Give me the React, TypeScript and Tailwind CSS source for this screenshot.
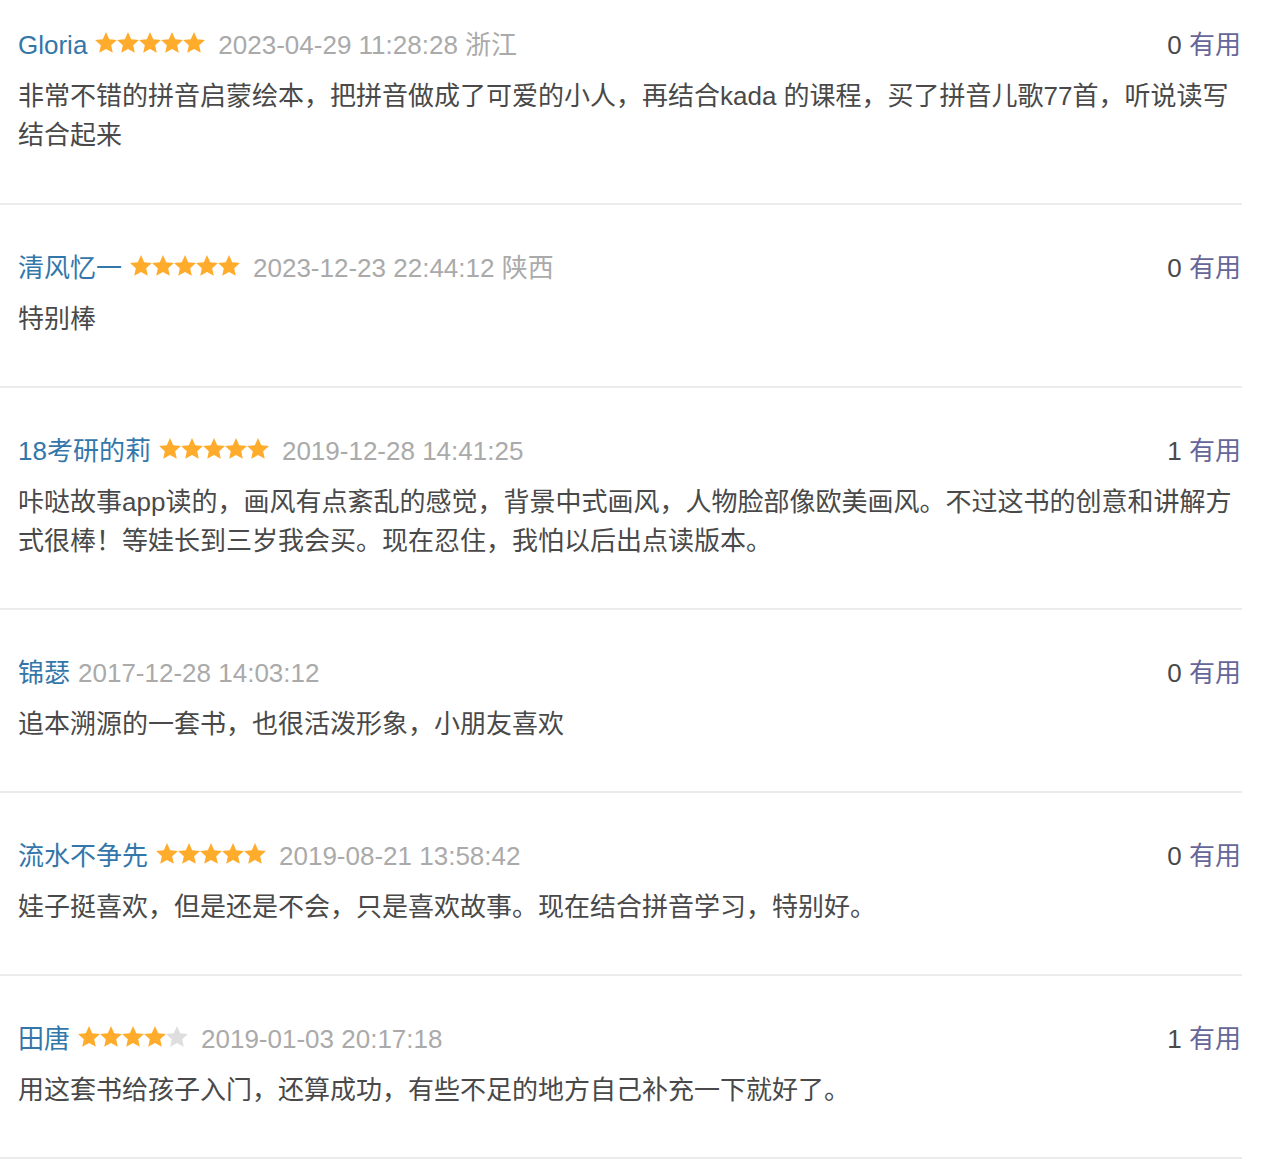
import React from 'react';

interface Comment {
  id: number;
  user: string;
  rating: number | null;
  time: string;
  location?: string;
  votes: number;
  content: string;
}

const comments: Comment[] = [
  {
    id: 1,
    user: 'Gloria',
    rating: 5,
    time: '2023-04-29 11:28:28',
    location: '浙江',
    votes: 0,
    content: '非常不错的拼音启蒙绘本，把拼音做成了可爱的小人，再结合kada 的课程，买了拼音儿歌77首，听说读写结合起来',
  },
  {
    id: 2,
    user: '清风忆一',
    rating: 5,
    time: '2023-12-23 22:44:12',
    location: '陕西',
    votes: 0,
    content: '特别棒',
  },
  {
    id: 3,
    user: '18考研的莉',
    rating: 5,
    time: '2019-12-28 14:41:25',
    votes: 1,
    content: '咔哒故事app读的，画风有点紊乱的感觉，背景中式画风，人物脸部像欧美画风。不过这书的创意和讲解方式很棒！等娃长到三岁我会买。现在忍住，我怕以后出点读版本。',
  },
  {
    id: 4,
    user: '锦瑟',
    rating: null,
    time: '2017-12-28 14:03:12',
    votes: 0,
    content: '追本溯源的一套书，也很活泼形象，小朋友喜欢',
  },
  {
    id: 5,
    user: '流水不争先',
    rating: 5,
    time: '2019-08-21 13:58:42',
    votes: 0,
    content: '娃子挺喜欢，但是还是不会，只是喜欢故事。现在结合拼音学习，特别好。',
  },
  {
    id: 6,
    user: '田唐',
    rating: 4,
    time: '2019-01-03 20:17:18',
    votes: 1,
    content: '用这套书给孩子入门，还算成功，有些不足的地方自己补充一下就好了。',
  },
];

// fat five-point star, like the rating sprite
function Star({ filled }: { filled: boolean }) {
  return (
    <svg viewBox="1.5 1.5 21 20" width="22" height="21" aria-hidden="true">
      <polygon
        points="12,1.5 15.06,8.29 22.46,9.1 16.95,14.11 18.47,21.4 12,17.7 5.53,21.4 7.05,14.11 1.54,9.1 8.94,8.29"
        fill={filled ? '#ffac2d' : '#dedede'}
      />
    </svg>
  );
}

function Stars({ rating }: { rating: number }) {
  return (
    <span className="flex items-center mb-[7px]">
      {[1, 2, 3, 4, 5].map((n) => (
        <Star key={n} filled={n <= rating} />
      ))}
    </span>
  );
}

export default function App() {
  return (
    <div className="bg-white min-h-[1162px] font-['Liberation_Sans','Noto_Sans_CJK_SC',sans-serif] text-[26px] leading-[39px] text-[#494949]">
      <div className="w-[1242px]">
        {comments.map((c, i) => (
          <div
            key={c.id}
            className={`${i === 0 ? 'pt-[26px] pb-[48px]' : 'pt-[44px] pb-[47px]'} pl-[18px] pr-[1px] border-b-2 border-[#ebebeb]`}
          >
            <div className="flex items-center justify-between h-[39px]">
              <div className="flex items-center">
                <span className="text-[#3377aa]">{c.user}</span>
                {c.rating !== null && (
                  <span className="ml-[8px]">
                    <Stars rating={c.rating} />
                  </span>
                )}
                <span className={`text-[#aaaaaa] ${c.rating !== null ? 'ml-[13px]' : 'ml-[8px]'}`}>
                  {c.time}
                  {c.location && ` ${c.location}`}
                </span>
              </div>
              <div className="whitespace-nowrap">
                <span className="text-[#494949]">{c.votes}</span>{' '}
                <span className="text-[#666699]">有用</span>
              </div>
            </div>
            <p className="mt-[12px]">{c.content}</p>
          </div>
        ))}
      </div>
    </div>
  );
}
